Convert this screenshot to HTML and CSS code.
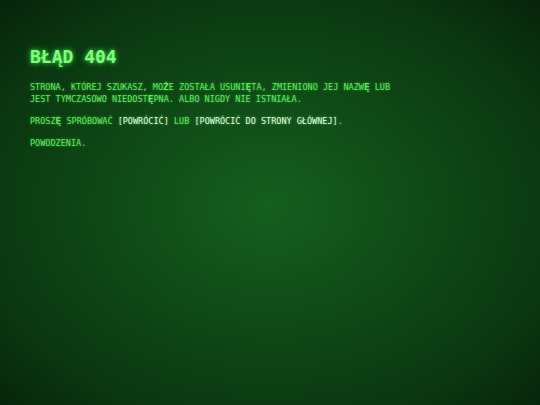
FILE: index.html
```html
<!DOCTYPE html>
<html lang="pl">
<head>
<meta charset="utf-8">
<title>Błąd 404</title>
<link rel="stylesheet" href="styles.css">
</head>
<body>
<main class="screen">
  <h1 class="title">BŁĄD 404</h1>
  <p class="text">STRONA, KTÓREJ SZUKASZ, MO<span class="fb">Ż</span>E ZOSTAŁA USUNI<span class="fb">Ę</span>TA, ZMIENIONO JEJ NAZW<span class="fb">Ę</span> LUB<br>JEST TYMCZASOWO NIEDOST<span class="fb">Ę</span>PNA. ALBO NIGDY NIE ISTNIAŁA.</p>
  <p class="text">PROSZ<span class="fb">Ę</span> SPRÓBOWAĆ <a class="link" href="#">[POWRÓCIĆ]</a> LUB <a class="link" href="#">[POWRÓCIĆ DO STRONY GŁÓWNEJ]</a>.</p>
  <p class="text">POWODZENIA.</p>
</main>
</body>
</html>
```
FILE: styles.css
```css
html, body {
  margin: 0;
  height: 100%;
}
body {
  background: radial-gradient(ellipse 75% 75% at 50% 51%, #155f1f 0%, #0f4916 40%, #0a3510 75%, #061f08 100%);
  font-family: "DejaVu Sans Mono", "Liberation Mono", monospace;
  color: #5fe85f;
}
.screen {
  padding: 47px 30px 0;
}
.title {
  margin: 0 0 14px;
  font-size: 18px;
  line-height: 20px;
  font-weight: bold;
  color: #7dff7d;
  text-shadow: 0 0 4px rgba(90, 255, 90, 0.75), 0 0 9px rgba(60, 230, 60, 0.4);
}
.text {
  margin: 0 0 10px;
  font-size: 8.5px;
  line-height: 12px;
  text-shadow: 0 0 3px rgba(90, 255, 90, 0.5);
}
.fb {
  font-size: 9.5px;
  line-height: 0;
  font-weight: bold;
}
.link {
  color: #dcffdc;
  text-decoration: none;
  text-shadow: 0 0 3px rgba(180, 255, 180, 0.5);
}
```
